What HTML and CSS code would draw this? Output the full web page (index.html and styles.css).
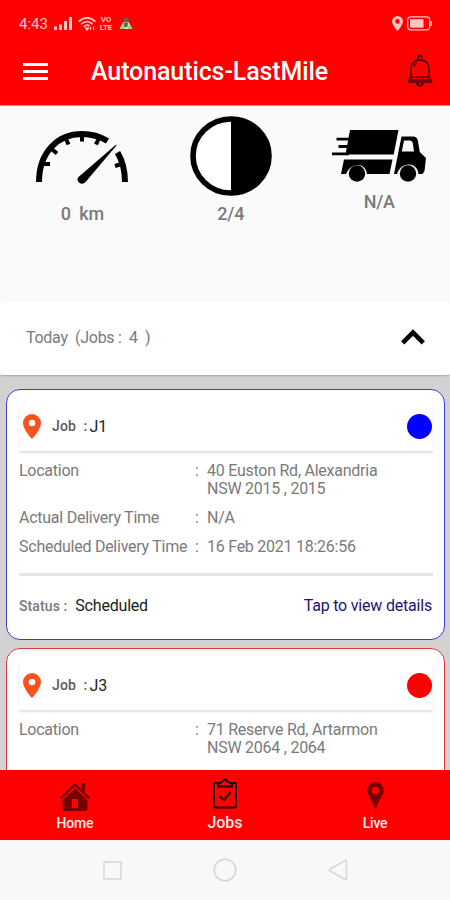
FILE: index.html
```html
<!DOCTYPE html>
<html lang="en">
<head>
    <meta charset="UTF-8">
    <meta name="viewport" content="width=device-width, initial-scale=1.0">
    <title>Autonautics-LastMile</title>
    <link rel="stylesheet" href="styles.css">
</head>
<body>
    <div class="app">
        <header class="app-header">
            <div class="status-bar">
                <span class="clock">4:43</span>
                <svg class="signal" width="18" height="13" viewBox="0 0 18 13" fill="currentColor">
                    <path d="M0 9.500h3v3.500H0zM5 7.500h3v5.500H5zM10 4h3v9h-3zM15 0h3v13h-3z"/>
                </svg>
                <svg class="wifi" width="18" height="14" viewBox="0 0 18 14" fill="none" stroke="currentColor" stroke-width="1.700">
                    <path d="M.7 4.500Q9-3 17.300 4.500M3.300 7.200Q9 2 14.500 7M5.800 9.800Q9 7 11.500 9"/>
                    <path d="M7.500 11.200L9 13l1.500-1.800zM12.500 10v3M15.500 9.500v3.500" stroke-width="1.200"/>
                </svg>
                <span class="volte"><span>VO</span><span>LTE</span></span>
                <svg class="app-badge" width="14" height="13" viewBox="0 0 14 13">
                    <path d="M5 1.500L8.500.5l1.500 3-1 3H5z" fill="#5d6350"/>
                    <path d="M4.500 5L9.500 5l4 7H.5z" fill="#e9dfa8"/>
                    <path d="M5 5.500h4l-.5 4-2 1-2-2z" fill="#456b55"/>
                    <path d="M1.500 10l3-2 1.500 4H1zM9 9l2.500 0 1.500 3H9z" fill="#a5c78b"/>
                </svg>
                <svg class="gps" width="11" height="15" viewBox="0 0 11 15" fill="currentColor">
                    <path fill-rule="evenodd" d="M5.500 0A5.400 5.400 0 0 0 .1 5.400C.1 9 5.500 15 5.500 15s5.400-6 5.400-9.600A5.400 5.400 0 0 0 5.500 0zm0 3.100a2.300 2.300 0 1 1 0 4.600 2.300 2.300 0 0 1 0-4.600z"/>
                </svg>
                <svg class="battery" width="25" height="15" viewBox="0 0 25 15">
                    <rect x=".7" y=".9" width="22" height="13" rx="3.200" fill="none" stroke="currentColor" stroke-width="1.200"/>
                    <rect x="3" y="3.200" width="13.500" height="8.400" fill="currentColor"/>
                    <path d="M24 5v5" stroke="currentColor" stroke-width="1.500"/>
                </svg>
            </div>
            <div class="toolbar">
                <svg class="menu" width="25" height="17" viewBox="0 0 25 17" fill="#fff">
                    <path d="M0 0h25v3H0zM0 7h25v3H0zM0 14h25v3H0z"/>
                </svg>
                <h1>Autonautics-LastMile</h1>
                <svg class="bell" width="26" height="32" viewBox="0 0 26 32" fill="none" stroke="#4a0b13" stroke-width="1.500">
                    <circle cx="13" cy="2.800" r="2"/>
                    <path d="M10.500 5C6 6.500 4 10 4 14v8l-2.500 3.500v1.500h23v-1.500L22 22v-8c0-4-2-7.500-6.500-9"/>
                    <path d="M10 5.500h6M4 22.200h18M2 25h22M6.500 12.500c.3-2.400 1.300-3.800 3-4.700"/>
                    <path d="M9.500 27.200c0 4.600 7 4.600 7 0M11.500 27.500v2M14.500 27.500v2"/>
                </svg>
            </div>
        </header>

        <section class="stats">
            <div class="stat">
                <svg width="92" height="54" viewBox="0 0 92 54">
                    <path d="M3 52C3 22 22 4 46 4Q60 4 71.500 11M81.500 22.500Q89 35 89 52" fill="none" stroke="#000" stroke-width="6"/>
                    <path d="M5 34l9 0M15 18.500l6 5M29.500 8l3 6.500M46 5v6.500M63 8l-3 6.500M87 33.500l-8 2.500" stroke="#000" stroke-width="4"/>
                    <path d="M42.500 47L79.500 15Q81.500 13.500 80 16L50 51.500Q47 55 43.500 53Q40 50 42.500 47z"/>
                </svg>
                <span>0&nbsp; km</span>
            </div>
            <div class="stat half">
                <svg width="82" height="80" viewBox="0 0 82 80">
                    <ellipse cx="41" cy="40" rx="38" ry="37" fill="#fff" stroke="#000" stroke-width="5.600"/>
                    <path d="M41 2a38 38 0 0 1 0 76z"/>
                </svg>
                <span>2/4</span>
            </div>
            <div class="stat truck">
                <svg width="94" height="53" viewBox="0 0 94 53">
                    <path d="M18 0h48.500l-4.800 24.500H13.500z"/>
                    <path d="M4.500 9.200H19M6.500 16.500H18M0 23.800h17" stroke="#000" stroke-width="2.800"/>
                    <path d="M12 29.500h48.500L57.500 44H35c-1.500-12-16-12-21 0H9z"/>
                    <path fill-rule="evenodd" d="M69.500 6.500H81q4 0 4.800 4l2 11.500 6.200 6-1.500 13-2 3h-4c-1-12-17-13-21.500 0h-3zM72 10.500L69.800 21.500H82l-1.200-8.500q-.5-2.500-2.800-2.500z"/>
                    <circle cx="25" cy="43.500" r="8.200"/>
                    <circle cx="76" cy="43.500" r="8.200"/>
                </svg>
                <span>N/A</span>
            </div>
        </section>

        <section class="day-bar">
            <span>Today&nbsp; (Jobs :&nbsp; 4&nbsp; )</span>
            <svg width="24" height="16" viewBox="0 0 24 16" fill="none" stroke="#000" stroke-width="4.600">
                <path d="M1.700 13.800L12 3.500l10.300 10.300"/>
            </svg>
        </section>

        <main class="job-list">
            <article class="job-card scheduled">
                <div class="job-head">
                    <svg class="pin" width="18" height="25" viewBox="0 0 18 25">
                        <path fill="#f9521b" fill-rule="evenodd" d="M9 0a9 9 0 0 0-9 9c0 6.500 9 16 9 16s9-9.500 9-16a9 9 0 0 0-9-9zm0 5.700a3.300 3.300 0 1 1 0 6.600 3.300 3.300 0 0 1 0-6.600z"/>
                    </svg>
                    <span class="job-label">Job&nbsp; :</span>
                    <span class="job-id">J1</span>
                    <span class="dot"></span>
                </div>
                <dl class="details">
                    <dt>Location</dt><dd>:</dd><dd>40 Euston Rd, Alexandria<br>NSW 2015 , 2015</dd>
                    <dt>Actual Delivery Time</dt><dd>:</dd><dd>N/A</dd>
                    <dt>Scheduled Delivery Time</dt><dd>:</dd><dd>16 Feb 2021 18:26:56</dd>
                </dl>
                <div class="job-foot">
                    <span class="status-label">Status :</span>
                    <span class="status">Scheduled</span>
                    <a class="more">Tap to view details</a>
                </div>
            </article>

            <article class="job-card failed">
                <div class="job-head">
                    <svg class="pin" width="18" height="25" viewBox="0 0 18 25">
                        <path fill="#f9521b" fill-rule="evenodd" d="M9 0a9 9 0 0 0-9 9c0 6.500 9 16 9 16s9-9.500 9-16a9 9 0 0 0-9-9zm0 5.700a3.300 3.300 0 1 1 0 6.600 3.300 3.300 0 0 1 0-6.600z"/>
                    </svg>
                    <span class="job-label">Job&nbsp; :</span>
                    <span class="job-id">J3</span>
                    <span class="dot"></span>
                </div>
                <dl class="details">
                    <dt>Location</dt><dd>:</dd><dd>71 Reserve Rd, Artarmon<br>NSW 2064 , 2064</dd>
                </dl>
            </article>
        </main>

        <nav class="tabs">
            <a class="tab">
                <svg width="30" height="28" viewBox="0 0 30 28" fill="#760000">
                    <path d="M15 0L0 14.500l1.500 1.500L15 3.500 28.500 16l1.500-1.500-5-5V0h-3.500v6z"/>
                    <path fill-rule="evenodd" d="M15 5.500L2.500 17v8.500q0 2.500 2.500 2.500h20q2.500 0 2.500-2.500V17zM12 16h6v9h-6z"/>
                </svg>
                <span>Home</span>
            </a>
            <a class="tab active">
                <svg width="24" height="31" viewBox="0 0 24 31" fill="none" stroke="#210000" stroke-width="2">
                    <path d="M6 5H2.500Q1 5 1 6.500V28q0 1.500 1.500 1.500h19Q23 29.500 23 28V6.500Q23 5 21.500 5H18"/>
                    <path d="M5 8.500V6l4.500-2.500q2.500-4 5 0L19 6v2.500zM7 18.500l4 3.500 6.500-8"/>
                </svg>
                <span>Jobs</span>
            </a>
            <a class="tab">
                <svg width="17" height="29" viewBox="0 0 17 29" fill="#760000">
                    <path fill-rule="evenodd" d="M8.500 0A8.300 8.300 0 0 0 .2 8.300C.2 13 6 18 8.500 29 11 18 16.800 13 16.800 8.300A8.300 8.300 0 0 0 8.500 0zm0 4.800a3.600 3.600 0 1 1 0 7.200 3.600 3.600 0 0 1 0-7.200z"/>
                </svg>
                <span>Live</span>
            </a>
        </nav>

        <div class="system-nav">
            <svg width="19" height="19" viewBox="0 0 19 19"><rect x="1" y="1" width="17" height="17"/></svg>
            <svg width="24" height="24" viewBox="0 0 24 24"><circle cx="12" cy="12" r="10.800"/></svg>
            <svg width="20" height="22" viewBox="0 0 20 22"><path d="M17.500 1.300L2 10q-1.500 1 0 2l15.500 8.700q1 .2 1-1V2.300q0-1.200-1-1z"/></svg>
        </div>
    </div>
</body>
</html>
```

FILE: styles.css
```css
:root {
    --red: #ff0000;
    --page: #fafafa;
    --list: #d2d2d2;
    --text: #7a7a7a;
    --status-icon: #ffc4c4;
}

* {
    box-sizing: border-box;
}

body {
    margin: 0;
    font-family: Roboto, "Liberation Sans", sans-serif;
    color: var(--text);
    background: var(--page);
}

svg {
    display: block;
    flex: none;
}

.app {
    display: flex;
    flex-direction: column;
    height: 900px;
    max-width: 450px;
    overflow: hidden;
}

/* header */
.app-header {
    height: 106px;
    flex: none;
    background: var(--red);
    border-bottom: 1px solid #ff7d7d;
}

.status-bar {
    display: flex;
    align-items: center;
    height: 46px;
    padding: 1px 18px 0 19px;
    color: var(--status-icon);
}

.clock {
    width: 35px;
    font-size: 15px;
    line-height: 18px;
}

.wifi {
    margin-left: 6px;
}

.volte {
    display: flex;
    flex-direction: column;
    align-items: center;
    width: 14px;
    margin-left: 3px;
    font-size: 8px;
    font-weight: 700;
    line-height: 8px;
    letter-spacing: -0.2px;
}

.volte span {
    height: 8px;
}

.app-badge {
    margin-left: 6px;
}

.gps {
    margin-left: auto;
    margin-right: 4px;
}

.toolbar {
    display: flex;
    align-items: center;
    height: 50px;
    padding: 0 17px 0 23px;
}

.toolbar h1 {
    margin: 2px 0 0 43px;
    font-size: 25px;
    font-weight: 500;
    line-height: 30px;
    letter-spacing: -0.1px;
    color: #fff;
    white-space: nowrap;
}

.bell {
    margin-left: auto;
}

/* stats */
.stats {
    display: flex;
    height: 196px;
    flex: none;
    padding: 24px 0 0 8px;
}

.stat {
    display: flex;
    flex: none;
    flex-direction: column;
    align-items: center;
    width: 148.500px;
    gap: 9px;
    font-size: 18px;
    font-weight: 500;
    line-height: 21px;
    letter-spacing: -0.2px;
}

.stat.half {
    margin-top: -14px;
    gap: 7px;
}

.stat:first-child {
    gap: 19px;
}

.stat.truck {
    gap: 8px;
}

/* day header */
.day-bar {
    display: flex;
    align-items: center;
    justify-content: space-between;
    height: 73px;
    flex: none;
    padding: 0 25px 3px 26px;
    background: #fff;
    border-radius: 3px;
    box-shadow: 0 1px 2px rgba(0, 0, 0, 0.2);
    font-size: 16px;
    letter-spacing: -0.28px;
    z-index: 1;
}

/* jobs */
.job-list {
    flex: 1;
    min-height: 0;
    padding: 14px 5px 0 6px;
    background: var(--list);
    overflow: hidden;
}

.job-card {
    height: 251px;
    margin-bottom: 8px;
    padding: 11px 11px 0 12px;
    background: #fff;
    border: 1.500px solid;
    border-radius: 14px;
}

.job-card.scheduled {
    border-color: #3e3ed0;
}

.job-card.failed {
    border-color: #e03a3a;
}

.job-head {
    display: flex;
    align-items: center;
    height: 50px;
    padding-left: 4px;
    box-shadow: 0 2px 2px rgba(0, 0, 0, 0.12);
}

.job-label {
    margin-left: 11px;
    font-size: 14px;
    font-weight: 500;
    letter-spacing: 0.2px;
    color: #5c5c5c;
}

.job-id {
    margin-left: 2px;
    font-size: 16px;
    color: #222;
}

.dot {
    width: 25px;
    height: 25px;
    margin-left: auto;
    margin-right: 1px;
    border-radius: 50%;
}

.scheduled .dot {
    background: #0000ff;
}

.failed .dot {
    background: var(--red);
}

.details {
    display: grid;
    grid-template-columns: 176px 12px 1fr;
    row-gap: 10.500px;
    margin: 11px 0 0;
    font-size: 16px;
    line-height: 18.300px;
    letter-spacing: -0.25px;
}

.details dd {
    margin: 0;
}

.job-foot {
    display: flex;
    align-items: center;
    height: 62px;
    margin-top: 17px;
    border-top: 3px solid #e6e6e6;
    font-size: 16px;
    letter-spacing: -0.2px;
}

.status-label {
    font-size: 14px;
    font-weight: 500;
    letter-spacing: 0.1px;
}

.status {
    margin-left: 8px;
    color: #1c1c1c;
}

.more {
    margin-left: auto;
    margin-right: 1px;
    color: #1d1470;
}

/* bottom tabs */
.tabs {
    display: flex;
    height: 70px;
    flex: none;
    background: var(--red);
}

.tab {
    display: flex;
    flex: 1;
    flex-direction: column;
    align-items: center;
    justify-content: flex-end;
    gap: 4px;
    padding-bottom: 8px;
    color: #ffe9e9;
    font-size: 14px;
    font-weight: 500;
    line-height: 17px;
    letter-spacing: -0.2px;
}

.tab.active {
    font-size: 16px;
    line-height: 19px;
    letter-spacing: 0;
}

.system-nav {
    display: flex;
    align-items: center;
    justify-content: space-between;
    height: 60px;
    flex: none;
    padding: 0 102px 0 103px;
    background: #f8f8f8;
    fill: none;
    stroke: #d6d6d6;
    stroke-width: 1.500;
}
```
